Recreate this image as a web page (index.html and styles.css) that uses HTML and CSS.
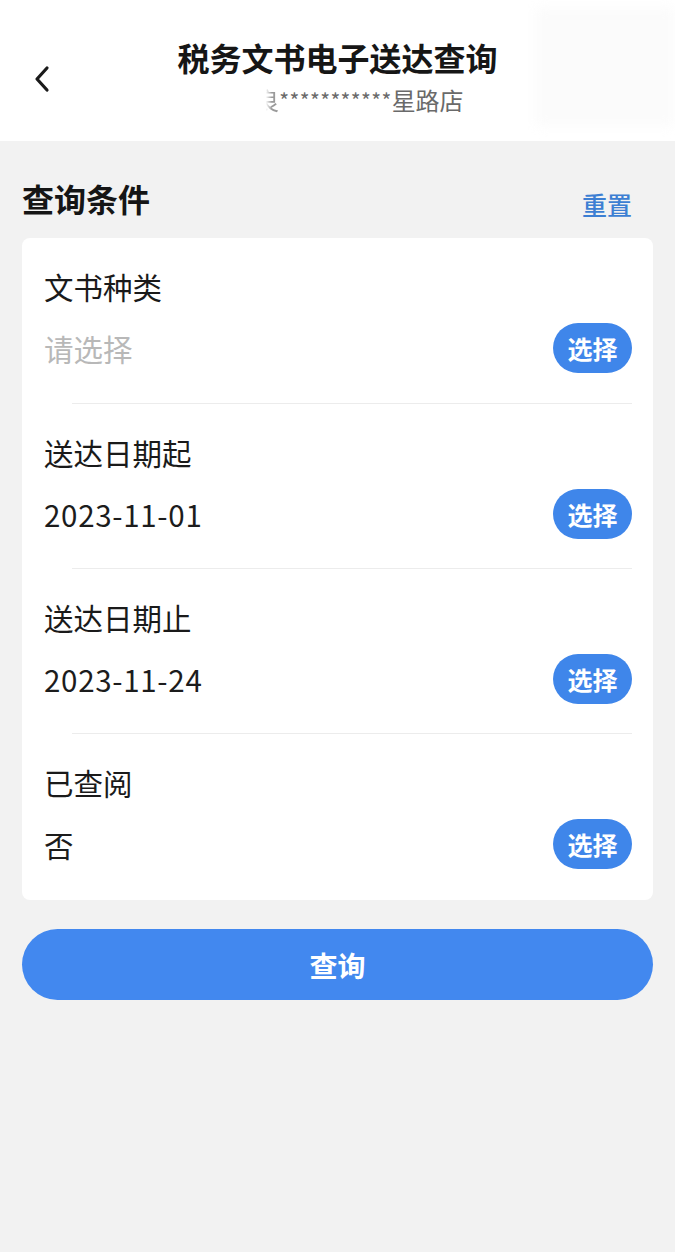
FILE: index.html
```html
<!DOCTYPE html>
<html lang="zh-CN">
<head>
    <meta charset="UTF-8">
    <meta name="viewport" content="width=device-width, initial-scale=1.0">
    <title>税务文书电子送达查询</title>
    <link rel="stylesheet" href="styles.css">
</head>
<body>
    <div class="header">
        <div class="back">
            <svg width="20" height="28" viewBox="0 0 20 28">
                <path d="M15 3 L5 14 L15 25" fill="none" stroke="#1a1a1a" stroke-width="3.2" stroke-linecap="round" stroke-linejoin="round"/>
            </svg>
        </div>
        <div class="titles">
            <h1>税务文书电子送达查询</h1>
            <div class="sub"><span class="cut">良</span><span class="stars">***********</span>星路店</div>
        </div>
        <div class="blur-box"></div>
    </div>

    <div class="section-head">
        <h2>查询条件</h2>
        <a class="reset">重置</a>
    </div>

    <div class="card">
        <div class="row first">
            <div class="label">文书种类</div>
            <div class="value-line">
                <span class="value placeholder">请选择</span>
                <button class="pick">选择</button>
            </div>
        </div>
        <div class="divider"></div>
        <div class="row">
            <div class="label">送达日期起</div>
            <div class="value-line">
                <span class="value num">2023-11-01</span>
                <button class="pick">选择</button>
            </div>
        </div>
        <div class="divider"></div>
        <div class="row">
            <div class="label">送达日期止</div>
            <div class="value-line">
                <span class="value num">2023-11-24</span>
                <button class="pick">选择</button>
            </div>
        </div>
        <div class="divider"></div>
        <div class="row last">
            <div class="label">已查阅</div>
            <div class="value-line">
                <span class="value">否</span>
                <button class="pick">选择</button>
            </div>
        </div>
    </div>

    <button class="query">查询</button>
</body>
</html>
```

FILE: styles.css
```css
* {
    box-sizing: border-box;
}

body {
    margin: 0;
    background: #f2f2f2;
    font-family: "Noto Sans CJK SC", "Noto Sans", sans-serif;
    color: #1a1a1a;
}

.header {
    position: relative;
    height: 141px;
    background: #fff;
    display: flex;
    justify-content: center;
}

.back {
    position: absolute;
    left: 32px;
    top: 65px;
}

.titles {
    text-align: center;
    padding-top: 35px;
}

h1 {
    margin: 0;
    font-size: 32px;
    line-height: 45px;
    font-weight: 700;
    color: #161616;
}

.sub {
    font-size: 24px;
    line-height: 30px;
    color: #6a6a6a;
    margin-top: 5px;
    padding-left: 58px;
}

.cut {
    color: #9a9a9a;
    -webkit-mask-image: linear-gradient(to right, transparent 45%, #000 70%);
    mask-image: linear-gradient(to right, transparent 45%, #000 70%);
    margin-left: -14px;
}

.stars {
    font-size: 21px;
    letter-spacing: 0.4px;
    vertical-align: top;
}

.blur-box {
    position: absolute;
    right: 0;
    top: 8px;
    width: 140px;
    height: 118px;
    background: #fbfbfb;
    filter: blur(6px);
}

.section-head {
    display: flex;
    justify-content: space-between;
    align-items: center;
    padding: 16px 43px 0 22px;
    height: 97px;
}

h2 {
    margin: 0;
    font-size: 32px;
    font-weight: 700;
    line-height: 46px;
    color: #151515;
}

.reset {
    font-size: 25px;
    font-weight: 500;
    color: #3d7fd3;
    margin-top: 12px;
}

.card {
    background: #fff;
    margin: 0 22px;
    border-radius: 8px;
}

.row {
    padding: 28px 21px 29px 22px;
}

.row.first {
    padding-bottom: 30px;
}

.row.last {
    padding-bottom: 31px;
}

.label {
    font-size: 29.5px;
    line-height: 40px;
    color: #1a1a1a;
}

.value-line {
    display: flex;
    justify-content: space-between;
    align-items: center;
    margin-top: 17px;
    height: 50px;
}

.value {
    font-size: 29.5px;
    line-height: 40px;
    color: #1c1c1c;
}

.value.num {
    letter-spacing: 0.7px;
}

.value.placeholder {
    color: #b8b8b8;
}

.pick {
    width: 79px;
    height: 50px;
    border: none;
    border-radius: 25px;
    background: #3f86ea;
    color: #fff;
    font-family: inherit;
    font-size: 25px;
    font-weight: 700;
    padding: 0;
}

.divider {
    height: 1px;
    background: #ececec;
    margin: 0 21px 0 50px;
}

.query {
    display: block;
    margin: 29px 22px 0;
    width: 631px;
    height: 71px;
    border: none;
    border-radius: 36px;
    background: #4288ef;
    color: #fff;
    font-family: inherit;
    font-size: 28px;
    font-weight: 700;
}
```
